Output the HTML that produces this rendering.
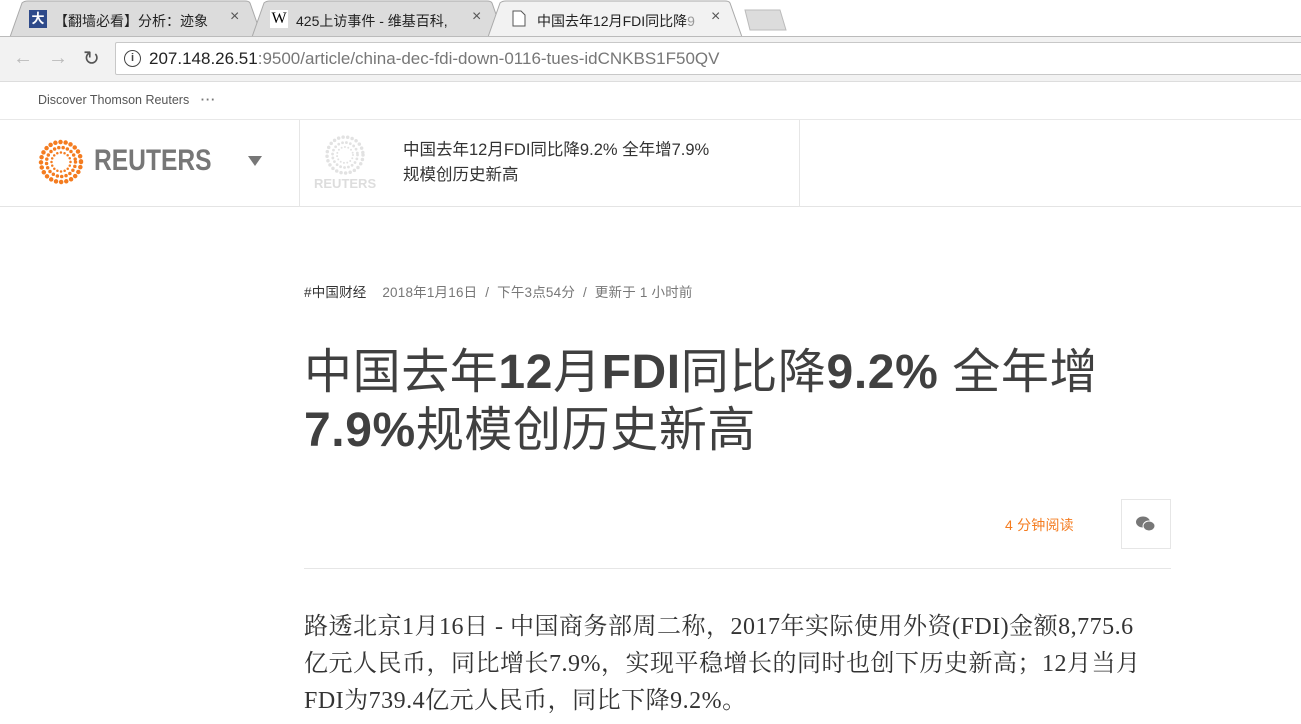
<!DOCTYPE html>
<html><head><meta charset="utf-8"><style>
*{margin:0;padding:0;box-sizing:border-box}
body{width:1301px;height:724px;overflow:hidden;background:#fff;font-family:"Liberation Sans","Noto Sans CJK SC",sans-serif;position:relative}
.abs{position:absolute}
.tabbar{left:0;top:0;width:1301px;height:37px;background:#fff}
.tab{position:absolute;top:2px;height:35px;font-size:14px;color:#222;padding-top:9px;white-space:nowrap}
.x{position:absolute;top:8px;font-size:16px;color:#555}
.toolbar{left:0;top:36px;width:1301px;height:46px;background:#f2f2f2;border-top:1px solid #bbb;border-bottom:1px solid #ddd}
.addr{left:115px;top:42px;width:1190px;height:33px;background:#fff;border:1px solid #c8c8c8;border-radius:2px;font-size:17px;color:#222;padding:6px 0 0 33px;white-space:nowrap}
</style></head><body>
<div class="abs tabbar">
 <svg class="abs" style="left:0;top:0" width="800" height="37">
  <path d="M10 37 L22 3 Q24 1 28 1 L245 1 Q249 1 250 3 L262 37" fill="#dcdcdc" stroke="#aaa"/>
  <path d="M252 37 L264 3 Q266 1 270 1 L487 1 Q491 1 492 3 L504 37" fill="#dcdcdc" stroke="#aaa"/>
  <path d="M488 37 L500 3 Q502 1 506 1 L725 1 Q729 1 730 3 L742 37" fill="#f2f2f2" stroke="#aaa"/>
  <path d="M745 10 L780 10 L786 30 L750 30 Z" fill="#dcdcdc" stroke="#bbb"/>
  <line x1="0" y1="36.5" x2="488" y2="36.5" stroke="#bbb"/>
  <line x1="742" y1="36.5" x2="1301" y2="36.5" stroke="#bbb"/>
 </svg>
 <div class="abs" style="left:29px;top:10px;width:18px;height:18px;background:#2e4a8a;color:#fff;font-size:13px;text-align:center;line-height:18px;font-weight:bold">大</div>
 <div class="tab" style="left:54px">【翻墙必看】分析：迹象</div><div class="x" style="left:230px">×</div>
 <div class="abs" style="left:270px;top:10px;width:18px;height:18px;background:#fff;font-family:'Liberation Serif',serif;font-size:16px;line-height:18px;text-align:center">W</div>
 <div class="tab" style="left:296px">425上访事件 - 维基百科,</div><div class="x" style="left:472px">×</div>
 <svg class="abs" style="left:512px;top:10px" width="14" height="17"><path d="M1 1h8l4 4v11H1z" fill="#fff" stroke="#555"/></svg>
 <div class="tab" style="left:537px">中国去年12月FDI同比降<span style="color:#999">9</span></div><div class="x" style="left:711px">×</div>
</div>
<div class="abs toolbar"></div>
<div class="abs" style="left:13px;top:47px;font-size:20px;color:#bbb">←</div>
<div class="abs" style="left:48px;top:47px;font-size:20px;color:#bbb">→</div>
<div class="abs" style="left:83px;top:46px;font-size:20px;color:#555">↻</div>
<div class="abs addr">207.148.26.51<span style="color:#777">:9500/article/china-dec-fdi-down-0116-tues-idCNKBS1F50QV</span></div>
<div class="abs" style="left:124px;top:50px;width:17px;height:17px;border:1.5px solid #444;border-radius:50%;font-size:11px;text-align:center;line-height:14px;color:#444;font-weight:bold">i</div>
<div class="abs" style="left:38px;top:93px;font-size:12.5px;color:#555">Discover Thomson Reuters <span style="margin-left:8px;font-weight:bold;letter-spacing:1px;color:#777">···</span></div>
<div class="abs" style="left:0;top:119px;width:1301px;height:88px;border-top:1px solid #e8e8e8;border-bottom:1px solid #e4e4e4"></div>
<div class="abs" style="left:299px;top:120px;width:1px;height:87px;background:#e6e6e6"></div>
<div class="abs" style="left:799px;top:120px;width:1px;height:87px;background:#e6e6e6"></div>
<svg class="abs" style="left:38px;top:139px" width="46" height="46">
 <g fill="none" stroke="#f47c20" stroke-linecap="round">
  <circle cx="23" cy="23" r="20" stroke-width="4.5" stroke-dasharray="0 5.2"/>
  <circle cx="23" cy="23" r="14.5" stroke-width="3.5" stroke-dasharray="0 4.4"/>
  <circle cx="23" cy="23" r="9.5" stroke-width="2.5" stroke-dasharray="0 3.7"/>
 </g>
</svg>
<div class="abs" style="left:94px;top:144px;font-size:30px;color:#777;font-weight:bold;transform:scaleX(0.82);transform-origin:0 0">REUTERS</div>
<svg class="abs" style="left:248px;top:156px" width="15" height="11"><path d="M0 0h14l-7 10z" fill="#777"/></svg>
<svg class="abs" style="left:324px;top:134px" width="42" height="42">
 <g fill="none" stroke="#e2e2e2" stroke-linecap="round">
  <circle cx="21" cy="21" r="18" stroke-width="3.5" stroke-dasharray="0 4.6"/>
  <circle cx="21" cy="21" r="12.5" stroke-width="2.8" stroke-dasharray="0 4"/>
  <circle cx="21" cy="21" r="8" stroke-width="2" stroke-dasharray="0 3.4"/>
 </g>
</svg>
<div class="abs" style="left:314px;top:176px;font-size:13px;color:#ddd;font-weight:bold">REUTERS</div>
<div class="abs" style="left:403px;top:138px;font-size:16.5px;line-height:25px;color:#333;white-space:nowrap">中国去年12月FDI同比降9.2% 全年增7.9%<br>规模创历史新高</div>
<div class="abs" style="left:304px;top:281px;font-size:13.5px;color:#777;white-space:nowrap;letter-spacing:0.2px"><span style="color:#333">#中国财经</span>&nbsp;&nbsp;&nbsp;&nbsp;2018年1月16日 &nbsp;/&nbsp; 下午3点54分 &nbsp;/&nbsp; 更新于 1 小时前</div>
<div class="abs" style="left:304px;top:344px;font-size:48px;line-height:58px;color:#404040;width:950px;white-space:nowrap;letter-spacing:0.6px">中国去年<b>12</b>月<b>FDI</b>同比降<b>9.2%</b> 全年增<br><b>7.9%</b>规模创历史新高</div>
<div class="abs" style="left:1005px;top:515px;font-size:14px;color:#f47c20;letter-spacing:0.2px">4 分钟阅读</div>
<div class="abs" style="left:1121px;top:499px;width:50px;height:50px;border:1px solid #e6e6e6"></div>
<svg class="abs" style="left:1136px;top:516px" width="20" height="16"><ellipse cx="7" cy="6" rx="7" ry="5.5" fill="#777"/><ellipse cx="13" cy="10" rx="6" ry="5" fill="#777" stroke="#fff" stroke-width="1"/></svg>
<div class="abs" style="left:304px;top:568px;width:867px;height:1px;background:#e6e6e6"></div>
<div class="abs" style="left:304px;top:609px;font-family:'Liberation Serif','Noto Serif CJK SC',serif;font-size:24px;line-height:37px;color:#333;width:900px;white-space:nowrap;letter-spacing:0.5px">路透北京1月16日 - 中国商务部周二称，2017年实际使用外资(FDI)金额8,775.6<br>亿元人民币，同比增长7.9%，实现平稳增长的同时也创下历史新高；12月当月<br>FDI为739.4亿元人民币，同比下降9.2%。</div>
</body></html>
